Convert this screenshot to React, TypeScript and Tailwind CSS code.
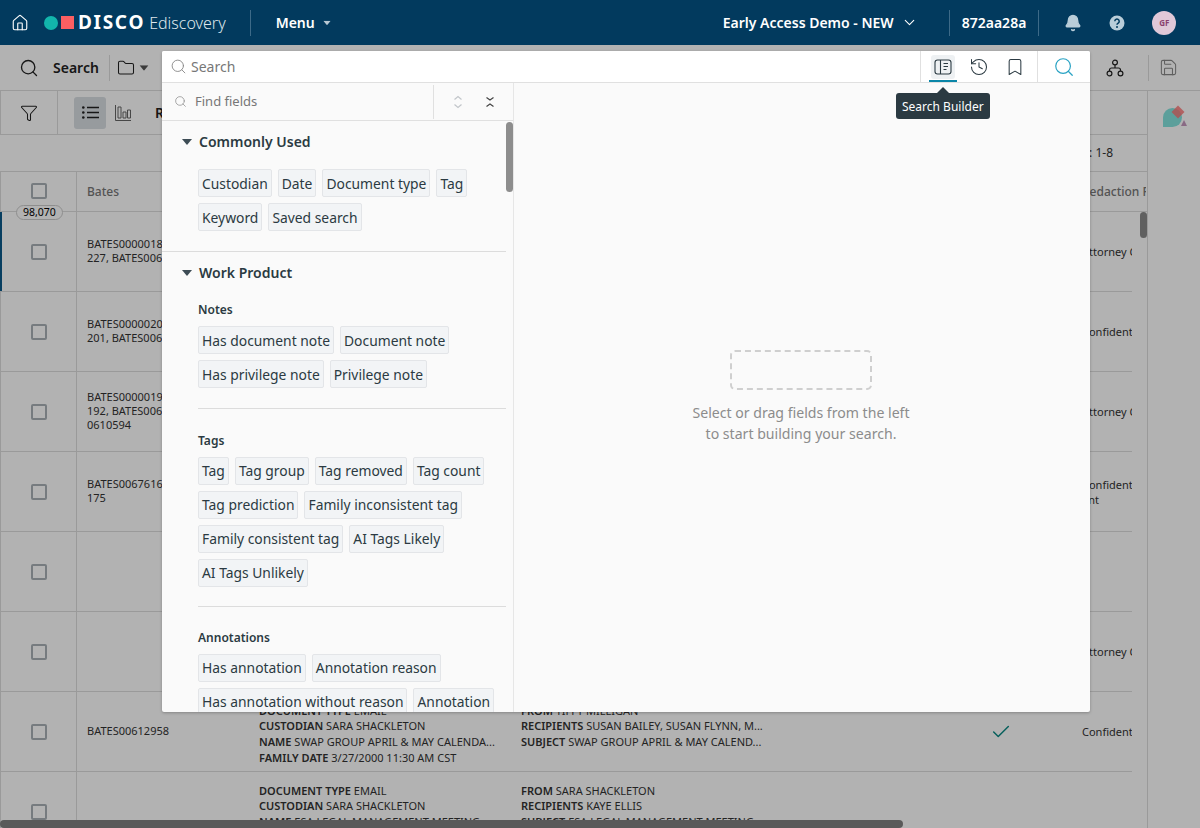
import { Bell, Bookmark, Check, ChevronDown, Folder, History, Home, Save, Search, Filter } from 'lucide-react';

interface RowData {
  bates: string[];
  redaction: string[];
  doc?: string[][];
  mail?: string[][];
  check?: boolean;
  active?: boolean;
}

const rows: RowData[] = [
  { bates: ['BATES00000183,', '227, BATES00610'], redaction: ['Attorney Client'], active: true },
  { bates: ['BATES00000201,', '201, BATES00610'], redaction: ['Confidential'] },
  { bates: ['BATES00000192,', '192, BATES00610', '0610594'], redaction: ['Attorney Client'] },
  { bates: ['BATES00676162,', '175'], redaction: ['Confidential', 'ent'] },
  { bates: [], redaction: [] },
  { bates: [], redaction: ['Attorney Client'] },
  {
    bates: ['BATES00612958'],
    redaction: ['Confidential'],
    check: true,
    doc: [
      ['DOCUMENT TYPE', 'EMAIL'],
      ['CUSTODIAN', 'SARA SHACKLETON'],
      ['NAME', 'SWAP GROUP APRIL & MAY CALENDA...'],
      ['FAMILY DATE', '3/27/2000 11:30 AM CST'],
    ],
    mail: [
      ['FROM', 'TIFFY MILLIGAN'],
      ['RECIPIENTS', 'SUSAN BAILEY, SUSAN FLYNN, M...'],
      ['SUBJECT', 'SWAP GROUP APRIL & MAY CALEND...'],
    ],
  },
  {
    bates: [],
    redaction: [],
    doc: [
      ['DOCUMENT TYPE', 'EMAIL'],
      ['CUSTODIAN', 'SARA SHACKLETON'],
      ['NAME', 'ESA LEGAL MANAGEMENT MEETING'],
    ],
    mail: [
      ['FROM', 'SARA SHACKLETON'],
      ['RECIPIENTS', 'KAYE ELLIS'],
      ['SUBJECT', 'ESA LEGAL MANAGEMENT MEETING'],
    ],
  },
];

const sections = [
  {
    title: 'Notes',
    spacing: 'mt-[19px] pb-[20px]',
    chips: ['Has document note', 'Document note', 'Has privilege note', 'Privilege note'],
  },
  {
    title: 'Tags',
    spacing: 'border-t border-[#dcdcdc] pt-[23.5px] pb-[19.5px]',
    chips: ['Tag', 'Tag group', 'Tag removed', 'Tag count', 'Tag prediction', 'Family inconsistent tag', 'Family consistent tag', 'AI Tags Likely', 'AI Tags Unlikely'],
  },
  {
    title: 'Annotations',
    spacing: 'border-t border-[#dcdcdc] pt-[22.5px] pb-[19.5px]',
    chips: ['Has annotation', 'Annotation reason', 'Has annotation without reason', 'Annotation'],
  },
];

function Caret({ className }: { className: string }) {
  return (
    <svg width="10" height="6" viewBox="0 0 10 6" className={className}>
      <path d="M0 0h10L5 6z" fill="currentColor" />
    </svg>
  );
}

function Chips({ items }: { items: string[] }) {
  return (
    <div className="flex flex-wrap gap-x-[6px] gap-y-[6px]">
      {items.map(c => (
        <span key={c} className="h-[28px] px-[3px] pt-[2px] flex items-center whitespace-nowrap rounded-[2px] border border-[#e3e5e8] bg-[#f2f4f6] text-[13.85px] text-[#2b3a42]">
          {c}
        </span>
      ))}
    </div>
  );
}

function KeyValues({ lines }: { lines?: string[][] }) {
  if (!lines) return null;
  return (
    <div className="text-[11px] leading-[15.7px] text-[#333] whitespace-nowrap">
      {lines.map(([k, v]) => (
        <div key={k}>
          <b className="font-semibold">{k}</b> {v}
        </div>
      ))}
    </div>
  );
}

function TableRow({ row }: { row: RowData }) {
  return (
    <div className="relative flex w-[1132px] h-[80px] shrink-0 border-b border-[#ddd]">
      {row.active && <div className="absolute left-0 top-0 bottom-0 w-[2px] bg-[#0b5a8a]" />}
      <div className="w-[77px] shrink-0 border-l border-r border-[#ddd] flex items-center justify-center">
        <span className="w-[16px] h-[16px] ml-[1px] rounded-[2px] border-2 border-[#a9b1b7] bg-white/10" />
      </div>
      <div className="w-[172px] shrink-0 pl-[10px] pb-[1px] flex flex-col justify-center text-[11px] leading-[14px] text-[#333] whitespace-nowrap">
        {row.bates.map(b => <div key={b}>{b}</div>)}
      </div>
      <div className="w-[261px] shrink-0 pl-[10px] pt-[10.5px]">
        <KeyValues lines={row.doc} />
      </div>
      <div className="w-[400px] shrink-0 pl-[11px] pt-[10.5px]">
        <KeyValues lines={row.mail} />
      </div>
      <div className="w-[171px] shrink-0 flex items-center text-[#0a8a85]">
        {row.check && <Check size={22} strokeWidth={1.6} className="ml-[80px]" />}
      </div>
      <div className="w-[51px] shrink-0 pl-[1px] flex flex-col justify-center overflow-hidden text-[11px] leading-[15px] text-[#333] whitespace-nowrap">
        {row.redaction.map(r => <div key={r}>{r}</div>)}
      </div>
    </div>
  );
}

function Background() {
  return (
    <div className="isolate h-[828px] overflow-hidden">
      <div className="h-[45px]" />
      <div className="h-[46px] flex items-center border-b border-[#ddd] text-[#222]">
        <Search size={20} strokeWidth={1.6} className="ml-[19px]" />
        <span className="ml-[14px] text-[14px] font-semibold">Search</span>
        <span className="ml-[10px] h-[26px] w-px bg-[#ddd]" />
        <Folder size={18} strokeWidth={1.4} className="ml-[7px]" />
        <Caret className="ml-[4px] text-[#555] scale-90" />
        <svg width="18" height="18" viewBox="0 0 18 18" fill="none" stroke="#222" strokeWidth="1.200" className="ml-[957px]">
          <circle cx="9" cy="3.500" r="2.400" />
          <circle cx="3.500" cy="14.500" r="2.400" />
          <circle cx="14.500" cy="14.500" r="2.400" />
          <path d="M9 6v3M3.500 12v-1a2 2 0 0 1 2-2h7a2 2 0 0 1 2 2v1" />
        </svg>
        <span className="ml-[24px] h-[26px] w-px bg-[#ddd]" />
        <Save size={19} strokeWidth={1.3} className="ml-[10px] text-[#888]" />
      </div>
      <div className="flex h-[calc(828px-91px)]">
        <div className="w-[1147px] shrink-0 overflow-hidden relative">
          <div className="h-[44px] flex items-center border-b border-l border-[#ddd] text-[#222]">
            <div className="w-[57px] h-full border-r border-[#ddd] flex items-center justify-center">
              <Filter size={18} strokeWidth={1.4} />
            </div>
            <div className="ml-[16px] w-[32px] h-[32px] rounded-[3px] bg-[#d9dee3] flex items-center justify-center">
              <svg width="17" height="13" viewBox="0 0 17 13" fill="none" stroke="#222" strokeWidth="1.300">
                <path d="M5 1.500h12M5 6.500h12M5 11.500h12" />
                <circle cx="1.300" cy="1.500" r="1.300" fill="#222" stroke="none" />
                <circle cx="1.300" cy="6.500" r="1.300" fill="#222" stroke="none" />
                <circle cx="1.300" cy="11.500" r="1.300" fill="#222" stroke="none" />
              </svg>
            </div>
            <svg width="18" height="18" viewBox="0 0 18 18" fill="none" stroke="#666" strokeWidth="1" className="ml-[8px]">
              <path d="M1.500 1v15.500H17M4 3h3v11H4zM9 8h3v6H9zM13.500 6h3v8h-3z" />
            </svg>
            <span className="ml-[23px] text-[14px] font-semibold">R</span>
          </div>
          <div className="h-[37px] flex items-center justify-end pr-[34px] border-b border-[#ddd] text-[12px] text-[#333]">
            : 1-8
          </div>
          <div className="relative h-[40px] flex border-b border-l border-[#ddd]">
            <div className="w-[76px] shrink-0 border-r border-[#ddd] flex items-center justify-center">
              <span className="w-[16px] h-[16px] rounded-[2px] border-2 border-[#a9b1b7] mt-[-1px]" />
            </div>
            <div className="pl-[10px] flex items-center text-[12px] font-medium text-[#777]">Bates</div>
            <div className="absolute left-[1081px] w-[64px] top-0 h-full overflow-hidden flex items-center text-[12px] font-medium text-[#777] whitespace-nowrap">
              Redaction Reason
            </div>
            <span className="absolute left-[15px] top-[33px] h-[15px] px-[6px] rounded-full border border-[#ccc] bg-white text-[10.5px] leading-[13px] text-black z-10">98,070</span>
          </div>
          {rows.map((r, i) => <TableRow key={i} row={r} />)}
          <div className="absolute right-0 top-[121px] w-[7px] h-[26px] rounded-full bg-[#8a8a8a]" />
        </div>
        <div className="flex-1 border-l border-[#ddd] pt-[14px] pl-[15px]">
          <svg width="25" height="23" viewBox="0 0 25 23">
            <path d="M0 22V12.500a9.500 9.500 0 1 1 9.500 9.500z" fill="#85e4df" />
            <path d="M15 .5L21.500 7 15 13.500 8.500 7z" fill="#ff7070" opacity=".8" />
            <path d="M18 21l3-6 3 6z" fill="#c498be" />
          </svg>
        </div>
      </div>
    </div>
  );
}

function TopBar() {
  return (
    <div className="absolute left-0 right-0 top-0 h-[45px] flex items-center bg-[#023a5e] text-white">
      <Home size={18} strokeWidth={1.5} className="ml-[11px]" />
      <span className="ml-[15px] w-[14px] h-[14px] rounded-full bg-[#12b5ac]" />
      <span className="ml-[3px] w-[13px] h-[13px] bg-[#fb5f62]" />
      <span className="ml-[4px] text-[19px] leading-none font-bold tracking-[1.7px]">DISCO</span>
      <span className="ml-[4px] text-[16px] font-light text-[#dfe7ec]">Ediscovery</span>
      <span className="ml-[24px] h-[26px] w-px bg-[#3d6a88]" />
      <span className="ml-[25px] text-[14px] font-semibold">Menu</span>
      <Caret className="ml-[7px] text-[#b8c8d3] scale-75" />
      <span className="ml-[391px] text-[14px] font-semibold whitespace-nowrap">Early Access Demo - NEW</span>
      <ChevronDown size={17} strokeWidth={1.5} className="ml-[7px]" />
      <span className="ml-[31px] h-[26px] w-px bg-[#3d6a88]" />
      <span className="ml-[12px] text-[14px] font-semibold">872aa28a</span>
      <span className="ml-[12px] h-[26px] w-px bg-[#3d6a88]" />
      <Bell size={18} fill="#b9cdd9" stroke="#b9cdd9" className="ml-[25px]" />
      <svg width="16" height="16" viewBox="0 0 16 16" className="ml-[27px]">
        <circle cx="8" cy="8" r="7.500" fill="#b9cdd9" />
        <path d="M5.800 6.200a2.200 2.200 0 1 1 3.400 1.900c-.8.500-1.200.9-1.200 1.700" fill="none" stroke="#023a5e" strokeWidth="1.500" />
        <circle cx="8" cy="11.900" r="1" fill="#023a5e" />
      </svg>
      <span className="ml-[27px] w-[24px] h-[24px] rounded-full bg-[#e0c8d8] flex items-center justify-center text-[8px] font-bold text-[#8a3f6e]">GF</span>
    </div>
  );
}

function SearchModal() {
  return (
    <div className="absolute left-[162px] top-[51px] w-[928px] h-[661px] flex flex-col bg-[#fafafa] rounded-[2px] shadow-[0_1px_3px_rgba(0,0,0,0.25)] overflow-hidden">
      <div className="h-[32px] shrink-0 flex items-center bg-white border-b border-[#e0e0e0]">
        <Search size={17} strokeWidth={1.3} className="ml-[8px] text-[#888]" />
        <span className="ml-[4px] flex-1 text-[14px] text-[#777]">Search</span>
        <div className="w-[117px] h-full border-l border-[#e0e0e0] flex items-center">
          <div className="relative ml-[10px] w-[24px] h-[24px] rounded-[3px] bg-[#eef1f3] flex items-center justify-center">
            <svg width="18" height="16" viewBox="0 0 18 16" fill="none" stroke="#2b3a42" strokeWidth="1.1">
              <rect x="1" y="1" width="16" height="14" rx="2.500" />
              <path d="M6.500 1v14M9.500 4.500H14M9.500 7.500H14M9.500 10.500h3" />
            </svg>
            <span className="absolute left-[-2px] right-[-2px] top-[25px] h-[2px] bg-[#0b86a8]" />
          </div>
          <History size={20} strokeWidth={1.25} className="ml-[14px] text-[#2b3a42]" />
          <Bookmark size={20} strokeWidth={1.25} className="ml-[16px] text-[#2b3a42]" />
        </div>
        <div className="w-[53px] h-full border-l border-[#e0e0e0] flex items-center justify-center">
          <Search size={22} strokeWidth={1.3} className="text-[#2aa3c4]" />
        </div>
      </div>
      <div className="flex flex-1 min-h-0">
        <div className="w-[352px] shrink-0 border-r border-[#e6e6e6] flex flex-col min-h-0">
          <div className="h-[38px] shrink-0 flex items-center border-b border-[#e0e0e0]">
            <Search size={13} strokeWidth={1.3} className="ml-[12px] text-[#888]" />
            <span className="ml-[8px] flex-1 text-[13px] text-[#777]">Find fields</span>
            <div className="w-[80px] h-[34px] border-l border-[#e0e0e0] flex items-center">
              <svg width="10" height="14" viewBox="0 0 10 14" fill="none" stroke="#c2c6ca" strokeWidth="1.200" className="ml-[19px]">
                <path d="M1.500 4.500L5 1.500 8.500 4.500M1.500 9.500L5 12.500 8.500 9.500" />
              </svg>
              <svg width="10" height="12" viewBox="0 0 10 12" fill="none" stroke="#444" strokeWidth="1.200" className="ml-[22px]">
                <path d="M1.500 1.500L5 4 8.500 1.500M1.500 10.500L5 8 8.500 10.500" />
              </svg>
            </div>
          </div>
          <div className="relative flex-1 overflow-hidden pr-[7px]">
            <div className="absolute right-0 top-[1px] w-[7px] h-[70px] rounded-full bg-[#8d8d8d]" />
            <div className="h-[131px] border-b border-[#dcdcdc] pl-[20px] pt-[10px]">
              <div className="flex items-center text-[14px] font-semibold text-[#2b3a42]">
                <Caret className="text-[#3d4c55]" />
                <span className="ml-[7px]">Commonly Used</span>
              </div>
              <div className="mt-[17px] ml-[16px] w-[290px]">
                <Chips items={['Custodian', 'Date', 'Document type', 'Tag', 'Keyword', 'Saved search']} />
              </div>
            </div>
            <div className="pl-[20px] pt-[10px]">
              <div className="flex items-center text-[14px] font-semibold text-[#2b3a42]">
                <Caret className="text-[#3d4c55]" />
                <span className="ml-[7px]">Work Product</span>
              </div>
              {sections.map(s => (
                <div key={s.title} className={`ml-[16px] ${s.spacing}`}>
                  <div className="text-[12px] leading-[16px] font-semibold text-[#2b3a42] mb-[8px]">{s.title}</div>
                  <div className="w-[300px]">
                    <Chips items={s.chips} />
                  </div>
                </div>
              ))}
            </div>
          </div>
        </div>
        <div className="flex-1 flex flex-col items-center pt-[267px] pr-[2px]">
          <div className="w-[142px] h-[40px] rounded-[5px] border-2 border-dashed border-[#cfcfcf]" />
          <p className="mt-[12px] text-[14.1px] leading-[21px] text-[#8c8c8c] text-center">
            Select or drag fields from the left<br />to start building your search.
          </p>
        </div>
      </div>
    </div>
  );
}

export default function App() {
  return (
    <div className="relative w-[1200px] h-[828px] overflow-hidden bg-white font-['Noto_Sans',sans-serif]">
      <Background />
      <div className="absolute inset-0 bg-black/30" />
      <div className="absolute left-0 bottom-0 w-[903px] h-[8px] rounded-full bg-[#5a5a5a]" />
      <TopBar />
      <SearchModal />
      <div className="absolute left-[896px] top-[93px] h-[26px] px-[6px] pt-[1px] flex items-center rounded-[3px] bg-[#2b3a42] text-[12px] text-white whitespace-nowrap">
        Search Builder
        <span className="absolute left-[41px] top-[-6px] w-0 h-0 border-l-[6px] border-r-[6px] border-b-[6px] border-l-transparent border-r-transparent border-b-[#2b3a42]" />
      </div>
    </div>
  );
}
